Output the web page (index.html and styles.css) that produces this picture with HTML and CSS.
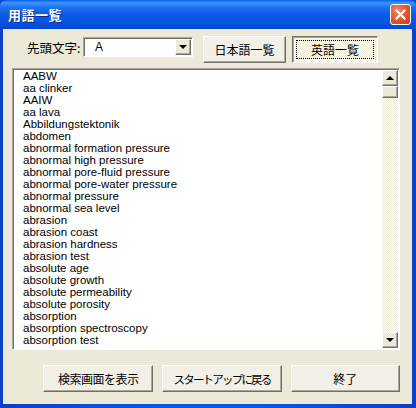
FILE: index.html
```html
<!DOCTYPE html>
<html lang="ja">
<head>
  <meta charset="UTF-8">
  <title>用語一覧</title>
  <link rel="stylesheet" href="styles.css">
</head>
<body>
  <div class="window">
    <div class="titlebar">
      <span class="title">用語一覧</span>
      <button class="close" title="閉じる">
        <svg width="11" height="11" viewBox="0 0 11 11"><path d="M1.5 1.5 L9.5 9.5 M9.5 1.5 L1.5 9.5" stroke="#fff" stroke-width="2.2" stroke-linecap="square"/></svg>
      </button>
    </div>

    <div class="client">
      <div class="toolbar">
        <label class="lead">先頭文字:</label>
        <div class="combo">
          <span class="combo-value">A</span>
          <span class="combo-btn"><span class="tri-down"></span></span>
        </div>
        <button class="btn btn-jp">日本語一覧</button>
        <button class="btn btn-en pressed"><span class="focus">英語一覧</span></button>
      </div>

      <div class="listbox">
        <ul class="items">
          <li>AABW</li>
          <li>aa clinker</li>
          <li>AAIW</li>
          <li>aa lava</li>
          <li>Abbildungstektonik</li>
          <li>abdomen</li>
          <li>abnormal formation pressure</li>
          <li>abnormal high pressure</li>
          <li>abnormal pore-fluid pressure</li>
          <li>abnormal pore-water pressure</li>
          <li>abnormal pressure</li>
          <li>abnormal sea level</li>
          <li>abrasion</li>
          <li>abrasion coast</li>
          <li>abrasion hardness</li>
          <li>abrasion test</li>
          <li>absolute age</li>
          <li>absolute growth</li>
          <li>absolute permeability</li>
          <li>absolute porosity</li>
          <li>absorption</li>
          <li>absorption spectroscopy</li>
          <li>absorption test</li>
        </ul>
        <div class="scrollbar">
          <span class="sb-btn"><span class="tri-up"></span></span>
          <span class="sb-thumb"></span>
          <span class="sb-track"></span>
          <span class="sb-btn"><span class="tri-down"></span></span>
        </div>
      </div>

      <div class="actions">
        <button class="btn btn-search">検索画面を表示</button>
        <button class="btn btn-start">スタートアップに戻る</button>
        <button class="btn btn-exit">終了</button>
      </div>
    </div>
  </div>
</body>
</html>
```

FILE: styles.css
```css
body {
  margin: 0;
  width: 416px;
  height: 408px;
  font-family: "Noto Sans CJK JP", sans-serif;
  font-size: 12px;
  color: #000;
}

.window {
  width: 416px;
  height: 408px;
  box-sizing: border-box;
  display: flex;
  flex-direction: column;
  background: linear-gradient(to right, #0842c8, #0a5ae8 40%, #0a5ae8 60%, #0842c8);
  padding: 0 4px 4px 3px;
}

.titlebar {
  height: 29px;
  margin: 0 -4px 0 -3px;
  display: flex;
  align-items: center;
  justify-content: space-between;
  padding: 0 5px 0 8px;
  background: linear-gradient(to bottom, #0a5fe8 0%, #3d95ff 10%, #1d72f2 25%, #0c5ae6 50%, #0653e0 80%, #0446cc 100%);
  border-radius: 6px 6px 0 0;
}

.title {
  color: #fff;
  font-weight: bold;
  font-size: 13px;
  letter-spacing: 0.5px;
  text-shadow: 1px 1px #0a2b8c;
}

.close {
  width: 21px;
  height: 21px;
  padding: 0;
  border: 1px solid #fff;
  border-radius: 3px;
  background: radial-gradient(circle at 35% 30%, #f08a6a, #e0542c 55%, #c6401c);
  display: flex;
  align-items: center;
  justify-content: center;
}

.client {
  flex: 1;
  background: #ece9d8;
  display: flex;
  flex-direction: column;
  padding: 7px 12px 0 9px;
}

.toolbar {
  display: flex;
  align-items: flex-start;
  height: 27px;
  padding-left: 15px;
}

.lead {
  margin-top: 3px;
  width: 56px;
  line-height: 18px;
  font-size: 12.5px;
}

.combo {
  margin-top: 1px;
  width: 110px;
  height: 20px;
  box-sizing: border-box;
  display: flex;
  align-items: center;
  background: #fff;
  border: 1px solid;
  border-color: #aca899 #fff #fff #aca899;
  box-shadow: inset 1px 1px #716f64;
}

.combo-value {
  flex: 1;
  padding-left: 11px;
  font-family: "Liberation Sans", sans-serif;
  font-size: 12px;
}

.combo-btn {
  width: 16px;
  height: 16px;
  margin-right: 1px;
  box-sizing: border-box;
  display: flex;
  align-items: center;
  justify-content: center;
  background: #ece9d8;
  border: 1px solid;
  border-color: #fff #716f64 #716f64 #fff;
  box-shadow: inset -1px -1px #aca899;
}

.tri-down {
  width: 0;
  height: 0;
  border-left: 4px solid transparent;
  border-right: 4px solid transparent;
  border-top: 4px solid #000;
}

.tri-up {
  width: 0;
  height: 0;
  border-left: 4px solid transparent;
  border-right: 4px solid transparent;
  border-bottom: 4px solid #000;
}

.btn {
  height: 27px;
  box-sizing: border-box;
  padding: 0;
  font-family: "Noto Sans CJK JP", sans-serif;
  font-size: 12px;
  color: #000;
  white-space: nowrap;
  background: #f1efe6;
  border: 1px solid;
  border-color: #fff #716f64 #716f64 #fff;
  box-shadow: inset -1px -1px #aca899;
  display: flex;
  align-items: center;
  justify-content: center;
}

.btn-jp {
  width: 83px;
  margin-left: 10px;
}

.btn-en {
  width: 86px;
  margin-left: 6px;
}

.pressed {
  border-color: #716f64 #fff #fff #716f64;
  box-shadow: inset 1px 1px #aca899;
  background: repeating-conic-gradient(#ffffff 0 25%, #ece9d8 0 50%) 0 0 / 2px 2px;
  padding: 3px;
}

.focus {
  flex: 1;
  align-self: stretch;
  display: flex;
  align-items: center;
  justify-content: center;
  border: 1px dotted #000;
}

.listbox {
  margin-top: 5px;
  width: 388px;
  height: 282px;
  box-sizing: border-box;
  display: flex;
  background: #fff;
  border: 1px solid;
  border-color: #aca899 #fff #fff #aca899;
  box-shadow: inset 1px 1px #716f64;
}

.items {
  flex: 1;
  margin: 0;
  padding: 1px 0 0 10px;
  list-style: none;
  overflow: hidden;
  font-family: "Liberation Sans", sans-serif;
  font-size: 11.5px;
  line-height: 12px;
}

.scrollbar {
  width: 16px;
  margin: 1px 1px 1px 0;
  display: flex;
  flex-direction: column;
}

.sb-btn {
  height: 16px;
  box-sizing: border-box;
  display: flex;
  align-items: center;
  justify-content: center;
  background: #ece9d8;
  border: 1px solid;
  border-color: #fff #716f64 #716f64 #fff;
  box-shadow: inset -1px -1px #aca899;
}

.sb-thumb {
  height: 12px;
  box-sizing: border-box;
  background: #ece9d8;
  border: 1px solid;
  border-color: #fff #716f64 #716f64 #fff;
  box-shadow: inset -1px -1px #aca899;
}

.sb-track {
  flex: 1;
  background: repeating-conic-gradient(#ffffff 0 25%, #ece9d8 0 50%) 0 0 / 2px 2px;
}

.actions {
  margin-top: 15px;
  display: flex;
  gap: 9px;
  padding-left: 31px;
}

.btn-search {
  width: 111px;
  letter-spacing: -0.5px;
}

.btn-start {
  width: 120px;
  font-size: 11.5px;
  letter-spacing: -1.8px;
}

.btn-exit {
  width: 110px;
}
```
